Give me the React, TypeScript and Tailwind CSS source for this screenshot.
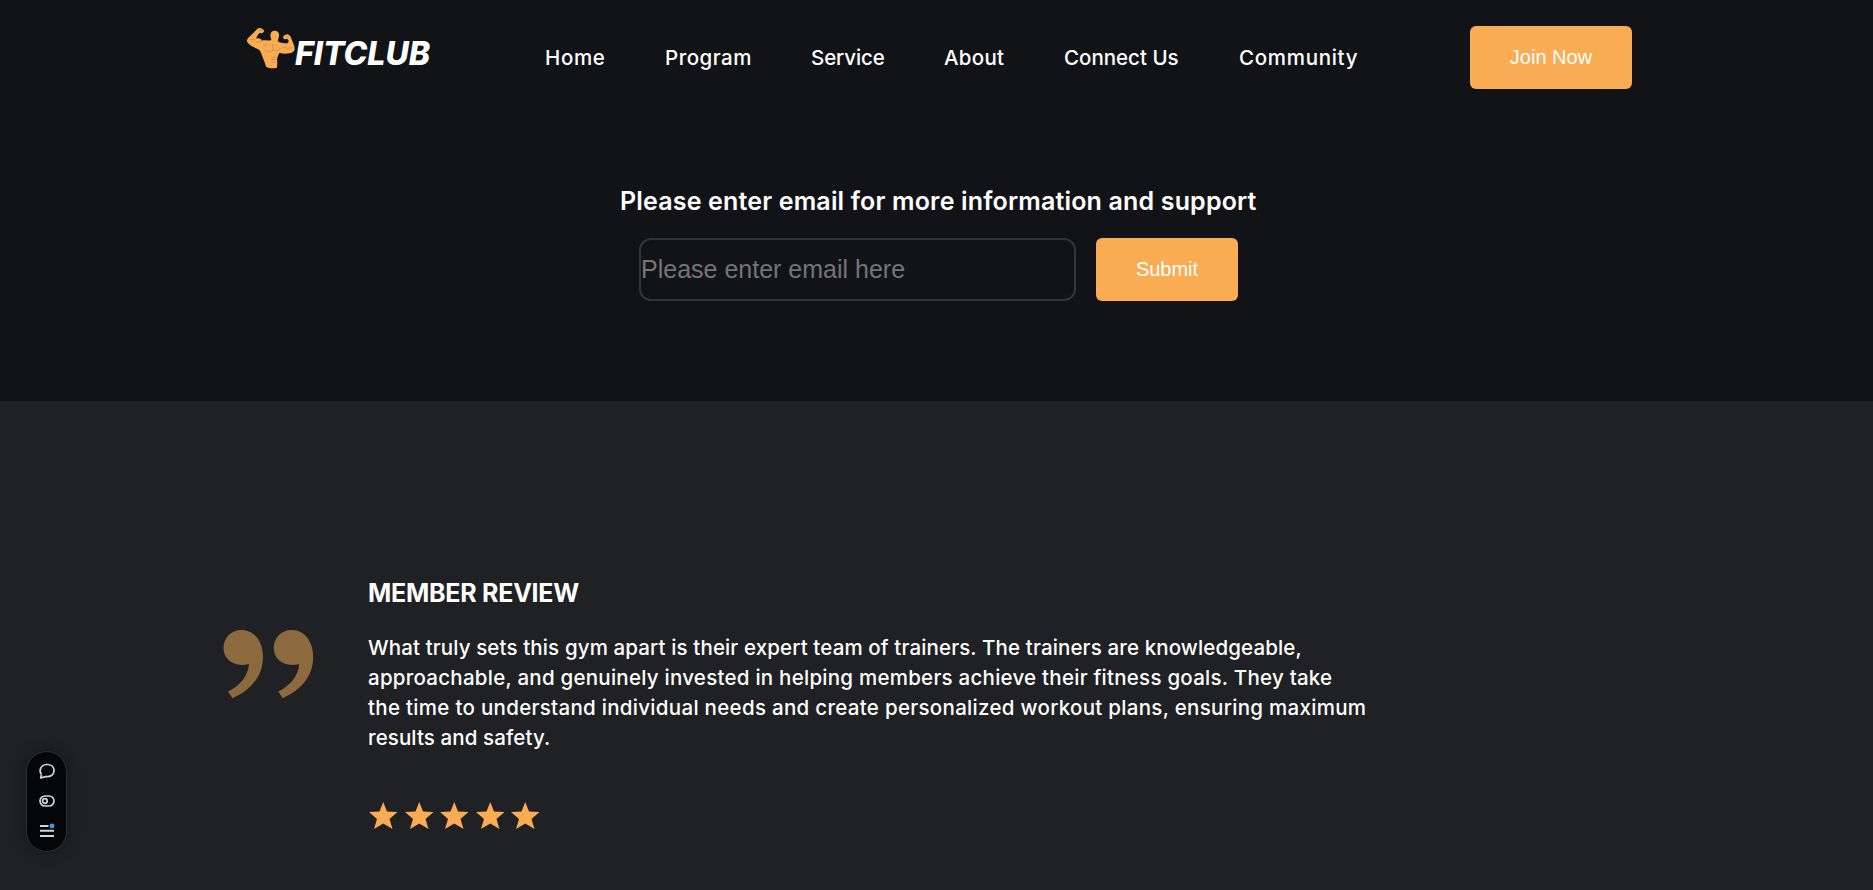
const navItems = [
  { label: "Home", cls: "w-[60px] tracking-[0.65px]" },
  { label: "Program", cls: "w-[86px] tracking-[0.5px]" },
  { label: "Service", cls: "w-[73px] tracking-[-0.1px]" },
  { label: "About", cls: "w-[60px] tracking-[0.3px]" },
  { label: "Connect Us", cls: "w-[115px] tracking-[0px]" },
  { label: "Community", cls: "w-[119px] tracking-[0.7px]" },
];

const reviewLines = [
  { text: "What truly sets this gym apart is their expert team of trainers. The trainers are knowledgeable,", cls: "tracking-[0.13px]" },
  { text: "approachable, and genuinely invested in helping members achieve their fitness goals. They take", cls: "tracking-[0.25px]" },
  { text: "the time to understand individual needs and create personalized workout plans, ensuring maximum", cls: "tracking-[0.3px]" },
  { text: "results and safety.", cls: "tracking-[0.1px]" },
];

function Logo() {
  return (
    <svg width="200" height="60" viewBox="240 18 200 60" className="h-[60px] w-[200px] shrink-0">
      <g transform="translate(242 22) scale(0.3333)">
        <path
          fill="#f9ac54"
          d="M46 20L54 17L65 23L66 29L60 34L52 33C47 40 43 45 43 50C49 48 56 49 60 56C68 53 78 58 88 54L86 46C83 34 88 26 98 26C109 26 114 35 110 47L107 57C113 63 122 63 129 64C136 65 140 62 140 56L137 51L126 52L123 44L129 38L138 37L145 43C149 54 156 65 158 79C158 89 150 94 140 94C130 96 121 95 113 92C106 102 104 112 106 122L105 137C94 140 82 139 72 134C69 119 62 107 58 95C56 88 53 83 46 80C36 77 22 70 16 61C13 55 17 49 22 44C31 36 39 28 46 20Z"
        />
        <path fill="none" stroke="#b98244" strokeWidth="1.800" d="M24 52L42 54M44 62L60 57M64 72L76 66M68 84C78 93 89 91 93 83C101 90 111 87 115 78M92 66L93 84M88 101L94 108L101 101M87 112L102 112M88 121L100 120M122 75L137 80L149 76M130 47L138 44M51 24L60 25" />
      </g>
      <text x="295" y="65" textLength="135" lengthAdjust="spacingAndGlyphs" fill="#fff" fontSize="32" fontWeight="800" fontStyle="italic" fontFamily="Inter, sans-serif">FITCLUB</text>
    </svg>
  );
}

function Toolbar() {
  return (
    <div className="absolute top-[751px] left-[26px] flex h-[101px] w-[41px] flex-col items-center rounded-full border border-[#303133] bg-[#050607] pt-[11px] shadow-[0_0_14px_rgba(0,0,0,0.35)]">
      <svg width="18" height="88" viewBox="0 0 18 88" fill="none" stroke="#d4d4d4" strokeWidth="1.700">
        <path d="M3.200 11.200C0.800 7.600 2.600 1.900 8.500 1.500H10C13.800 1.700 16 4.400 16 7.500C16 11 13.300 13.600 9.800 13.600H7.500L2.700 15L3.500 11.500" strokeLinejoin="round" />
        <rect x="2" y="33" width="14" height="10" rx="5" />
        <circle cx="6.900" cy="38" r="2.300" />
        <path d="M2 63H10.500M2 67.800H16M2 73H16" strokeWidth="2" />
        <circle cx="14" cy="63" r="2.400" fill="#3b97f5" stroke="none" />
      </svg>
    </div>
  );
}

export default function App() {
  return (
    <div className="relative flex h-[890px] w-full flex-col overflow-hidden bg-[#202125] font-['Inter',sans-serif] text-white">
      <div className="flex h-[401px] flex-col bg-[#121317]">
        <header className="flex h-[115px] pl-[240px]">
          <div className="w-[305px] shrink-0 pt-[18px]"><Logo /></div>
          <nav className="flex h-[115px] gap-[60px] text-[20.5px] font-medium">
            {navItems.map((n) => (
              <a key={n.label} className={`shrink-0 pt-11 leading-7 whitespace-nowrap ${n.cls}`}>{n.label}</a>
            ))}
          </nav>
          <button className="mt-[26px] ml-[112px] h-[63px] w-[162px] shrink-0 rounded-md bg-[#f9ac54] pb-0.5 font-['Liberation_Sans',sans-serif] text-xl">Join Now</button>
        </header>
        <div className="flex flex-col pt-[68px]">
          <h3 className="h-[35px] pl-[620px] text-[25px] leading-9 font-semibold tracking-[0.17px] whitespace-nowrap">Please enter email for more information and support</h3>
          <div className="flex gap-5 pt-5 pl-[639px]">
            <input className="h-[63px] w-[437px] rounded-xl border-2 border-[#333538] bg-transparent font-['Liberation_Sans',sans-serif] text-[25px] placeholder:text-[#757575]" placeholder="Please enter email here" />
            <button className="h-[63px] w-[142px] rounded-md bg-[#f9ac54] pb-0.5 font-['Liberation_Sans',sans-serif] text-xl">Submit</button>
          </div>
        </div>
      </div>
      <section className="flex pt-[168px] pl-[223px]">
        <svg width="91" height="69" viewBox="0 0 91 69" className="mt-[61px] shrink-0" fill="#8d693e">
          <path d="M18.500 0C31 0 40 11 40 27C40 46 28 60 9.500 68.200L5 61.500C17 56 25 46 26 34C11 38 0.500 29 0.500 18C0.500 8 8 0 18.500 0Z" />
          <path transform="translate(50.200 0)" d="M18.500 0C31 0 40 11 40 27C40 46 28 60 9.500 68.200L5 61.500C17 56 25 46 26 34C11 38 0.500 29 0.500 18C0.500 8 8 0 18.500 0Z" />
        </svg>
        <div className="ml-[54px]">
          <h2 className="text-[25px] leading-[48px] font-bold tracking-[-0.25px]">MEMBER REVIEW</h2>
          <p className="pt-4 text-[20.5px] leading-[30px] font-medium">
            {reviewLines.map((l) => (
              <span key={l.text} className={`block whitespace-nowrap ${l.cls}`}>{l.text}</span>
            ))}
          </p>
          <div className="flex gap-[7px] pt-[49px] pl-px">
            {[0, 1, 2, 3, 4].map((i) => (
              <svg key={i} width="28.500" height="28" viewBox="0 0 28.500 28" fill="#f9ac54">
                <path d="M14.250 0L18 9.500L28.500 10L20.500 17L23.500 27L14.250 21.500L5 27L8 17L0 10L10.500 9.500Z" />
              </svg>
            ))}
          </div>
        </div>
      </section>
      <Toolbar />
    </div>
  );
}
